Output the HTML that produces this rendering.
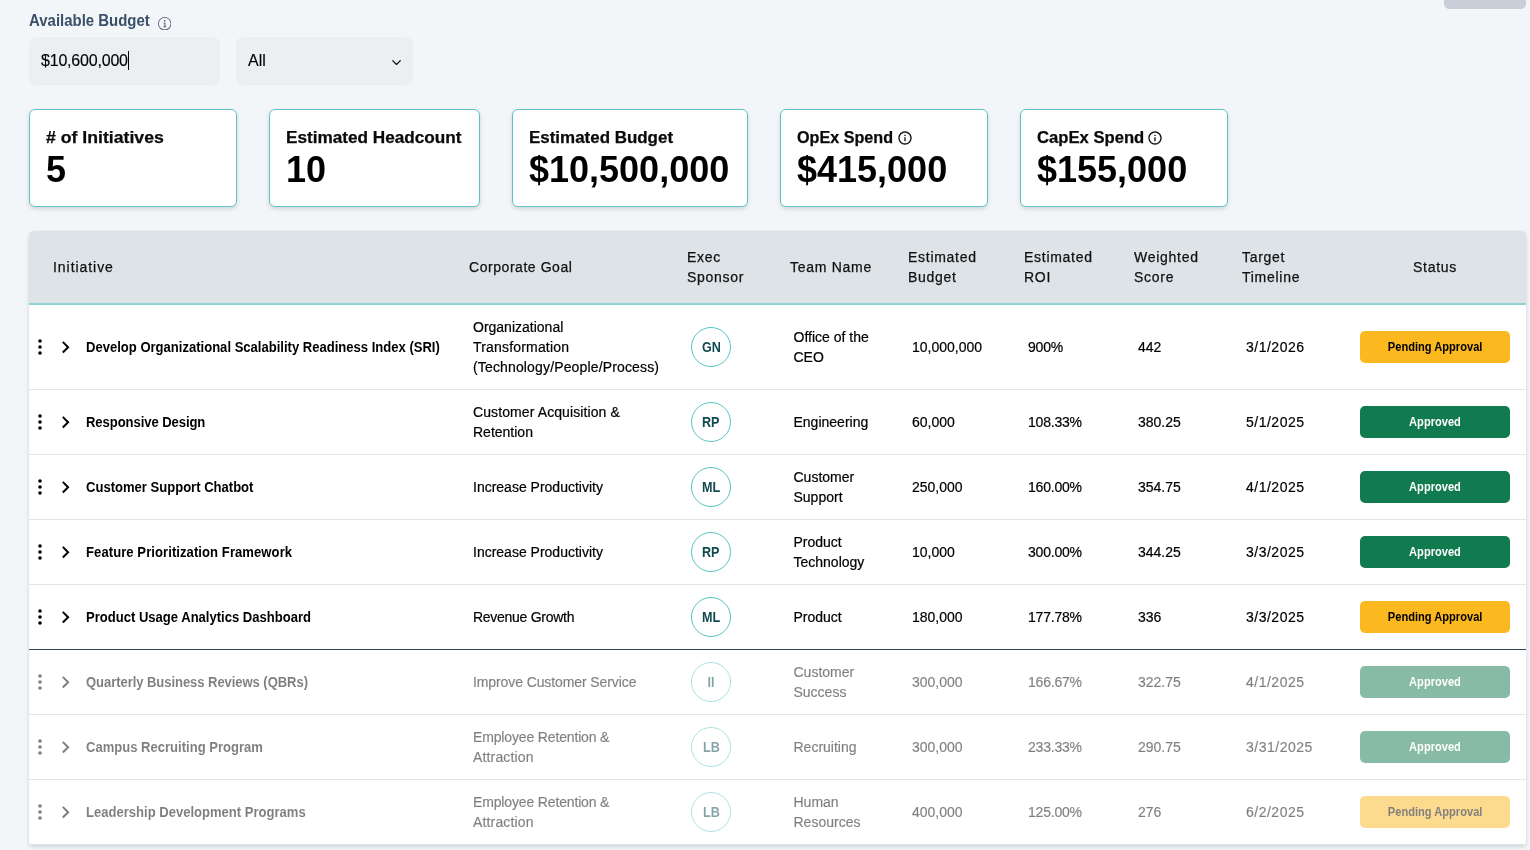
<!DOCTYPE html>
<html lang="en">
<head>
<meta charset="utf-8">
<title>Initiative Prioritization</title>
<style>
*{box-sizing:border-box;margin:0;padding:0}
html,body{width:1530px;height:850px;overflow:hidden}
body{background:#f3f6f9;font-family:"Liberation Sans","DejaVu Sans",sans-serif;color:#000;position:relative;-webkit-font-smoothing:antialiased;will-change:transform}
.abs{position:absolute}
.topbtn{left:1444px;top:-20px;width:82px;height:29px;background:#caced8;border-radius:5px}
.lbl{left:29px;top:11px;font-size:16px;line-height:20px;font-weight:bold;color:#3a4f69;white-space:nowrap;transform:scaleX(.935);transform-origin:0 50%}
.info1{left:157.8px;top:16.8px;width:13.4px;height:13.4px}
.inp{left:29px;top:37px;width:191px;height:48px;background:#eceff2;border-radius:7px;font-size:16px;line-height:48px;padding-left:12px;white-space:nowrap;letter-spacing:-.2px}
.caret{display:inline-block;width:1px;height:19px;background:#000;vertical-align:-4px;margin-left:0}
.sel{left:236px;top:37px;width:177px;height:48px;background:#eceff2;border-radius:7px;font-size:16px;line-height:48px;padding-left:12px}
.sel svg{position:absolute;left:154px;top:20px}
.card{top:109px;height:98px;background:#fff;border:1px solid #62c3c6;border-radius:6px;box-shadow:0 2px 4px rgba(0,0,0,.14);padding:0 0 0 16px}
.card .t{position:absolute;left:16px;top:16px;font-size:16px;line-height:24px;font-weight:bold;white-space:nowrap;color:#0a0a0a;transform-origin:0 50%;-webkit-text-stroke:.25px #0a0a0a}
.card .n{position:absolute;left:16px;top:39px;font-size:36px;line-height:42px;font-weight:bold;white-space:nowrap;color:#000}
.ci{position:absolute;top:20px;width:16px;height:16px;fill:#111}
.tbl{left:29px;top:231px;width:1497px;height:614px;background:#fff;border-radius:5px 5px 4px 4px;box-shadow:0 2px 4px rgba(0,0,0,.13),0 0 2px rgba(0,0,0,.07);overflow:hidden}
.hd{position:absolute;left:0;top:0;width:100%;height:74px;background:#dee3e7;border-bottom:2px solid #8ed6d6}
.hd div{position:absolute;top:50%;transform:translateY(-50%);font-size:14px;line-height:20px;letter-spacing:.72px;color:#111;white-space:nowrap}
.row{position:absolute;left:0;width:100%;border-bottom:1px solid #e2e6ea;font-size:14px;line-height:20px;-webkit-text-stroke:.2px currentColor}
.row.last{border-bottom:1px solid #2f4754}
.row>div,.row>svg{position:absolute;top:50%;transform:translateY(-50%);white-space:nowrap}
.row.dim>div,.row.dim>svg{opacity:.5}
.dots{left:-1px;width:24px;height:24px}
.chev{left:24px;width:24px;height:24px}
.nm{left:57px;font-weight:bold;transform:translateY(-50%) scaleX(.932)!important;transform-origin:0 50%}
.goal{left:444px}
.av{left:662px;width:40px;height:40px;border:1px solid #58c3c3;border-radius:50%;text-align:center;line-height:38px;font-weight:bold;font-size:14px;color:#10494f}
.team{left:764.5px}
.bud{left:883px}
.roi{left:999px;letter-spacing:-.2px}
.sc{left:1109px}
.tl{left:1217px;letter-spacing:.5px}
.st{left:1331px;width:150px;height:32px;border-radius:5px;text-align:center;line-height:32px;font-size:12px;font-weight:bold}
.nm,.st,.av{-webkit-text-stroke:0}
.hd div{-webkit-text-stroke:.25px currentColor}
.inp,.sel{-webkit-text-stroke:.15px currentColor}
.st span{display:inline-block;transform:scaleX(.925)}
.av span{display:inline-block;transform:scaleX(.9)}
.st.p{background:#fcb81f;color:#000}
.st.a{background:#127a4f;color:#fff}
</style>
</head>
<body>
<div class="abs topbtn"></div>
<div class="abs lbl">Available Budget</div>
<svg class="abs info1" viewBox="0 0 16 16" fill="#565c6c"><path d="M8 15A7 7 0 1 1 8 1a7 7 0 0 1 0 14zm0 1A8 8 0 1 0 8 0a8 8 0 0 0 0 16z"/><path d="M6.5 6.8h2.4v4.5h1v.9H6.3v-.9h1.3V7.8H6.5zM9 4.6a1 1 0 1 1-2 0 1 1 0 0 1 2 0z"/></svg>
<div class="abs inp">$10,600,000<span class="caret"></span></div>
<div class="abs sel">All<svg width="12" height="8" viewBox="0 0 12 8"><path d="M2.4 3.4l4.1 4.1 4.1-4.1" fill="none" stroke="#111" stroke-width="1.3"/></svg></div>

<div class="abs card" style="left:29px;width:208px"><div class="t" style="transform:scaleX(1.104)"># of Initiatives</div><div class="n">5</div></div>
<div class="abs card" style="left:269px;width:211px"><div class="t" style="transform:scaleX(1.073)">Estimated Headcount</div><div class="n">10</div></div>
<div class="abs card" style="left:512px;width:236px"><div class="t" style="transform:scaleX(1.059)">Estimated Budget</div><div class="n">$10,500,000</div></div>
<div class="abs card" style="left:780px;width:208px"><div class="t" style="transform:scaleX(1.01)">OpEx Spend</div><svg class="ci" viewBox="0 0 24 24" style="left:116px"><path d="M11 7h2v2h-2zm0 4h2v6h-2zm1-9C6.48 2 2 6.48 2 12s4.48 10 10 10 10-4.48 10-10S17.52 2 12 2zm0 18c-4.41 0-8-3.59-8-8s3.59-8 8-8 8 3.59 8 8-3.59 8-8 8z"/></svg><div class="n">$415,000</div></div>
<div class="abs card" style="left:1020px;width:208px"><div class="t" style="transform:scaleX(1.04)">CapEx Spend</div><svg class="ci" viewBox="0 0 24 24" style="left:126px"><path d="M11 7h2v2h-2zm0 4h2v6h-2zm1-9C6.48 2 2 6.48 2 12s4.48 10 10 10 10-4.48 10-10S17.52 2 12 2zm0 18c-4.41 0-8-3.59-8-8s3.59-8 8-8 8 3.59 8 8-3.59 8-8 8z"/></svg><div class="n">$155,000</div></div>

<div class="abs tbl">
<div class="hd">
<div style="left:24px;letter-spacing:.95px">Initiative</div>
<div style="left:440px;letter-spacing:.55px">Corporate Goal</div>
<div style="left:658px">Exec<br>Sponsor</div>
<div style="left:761px">Team Name</div>
<div style="left:879px">Estimated<br>Budget</div>
<div style="left:995px">Estimated<br>ROI</div>
<div style="left:1105px">Weighted<br>Score</div>
<div style="left:1213px">Target<br>Timeline</div>
<div style="left:1331px;width:150px;text-align:center">Status</div>
</div>
<div class="row" style="top:74px;height:85px"><svg class="dots" viewBox="0 0 24 24"><circle cx="12" cy="6" r="1.8"/><circle cx="12" cy="12" r="1.8"/><circle cx="12" cy="18" r="1.8"/></svg><svg class="chev" viewBox="0 0 24 24"><path transform="translate(.5 .2)" d="M10 6L8.59 7.41 13.17 12l-4.58 4.59L10 18l6-6z"/></svg><div class="nm">Develop Organizational Scalability Readiness Index (SRI)</div><div class="goal">Organizational<br><span style='letter-spacing:.18px'>Transformation</span><br><span style='letter-spacing:.15px'>(Technology/People/Process)</span></div><div class="av"><span>GN</span></div><div class="team">Office of the<br>CEO</div><div class="bud">10,000,000</div><div class="roi">900%</div><div class="sc">442</div><div class="tl">3/1/2026</div><div class="st p"><span>Pending Approval</span></div></div>
<div class="row" style="top:159px;height:65px"><svg class="dots" viewBox="0 0 24 24"><circle cx="12" cy="6" r="1.8"/><circle cx="12" cy="12" r="1.8"/><circle cx="12" cy="18" r="1.8"/></svg><svg class="chev" viewBox="0 0 24 24"><path transform="translate(.5 .2)" d="M10 6L8.59 7.41 13.17 12l-4.58 4.59L10 18l6-6z"/></svg><div class="nm"><span style='letter-spacing:-.07px'>Responsive Design</span></div><div class="goal"><span style='letter-spacing:.1px'>Customer Acquisition &amp;</span><br>Retention</div><div class="av"><span>RP</span></div><div class="team">Engineering</div><div class="bud">60,000</div><div class="roi">108.33%</div><div class="sc">380.25</div><div class="tl">5/1/2025</div><div class="st a"><span>Approved</span></div></div>
<div class="row" style="top:224px;height:65px"><svg class="dots" viewBox="0 0 24 24"><circle cx="12" cy="6" r="1.8"/><circle cx="12" cy="12" r="1.8"/><circle cx="12" cy="18" r="1.8"/></svg><svg class="chev" viewBox="0 0 24 24"><path transform="translate(.5 .2)" d="M10 6L8.59 7.41 13.17 12l-4.58 4.59L10 18l6-6z"/></svg><div class="nm">Customer Support Chatbot</div><div class="goal">Increase Productivity</div><div class="av"><span>ML</span></div><div class="team">Customer<br>Support</div><div class="bud">250,000</div><div class="roi">160.00%</div><div class="sc">354.75</div><div class="tl">4/1/2025</div><div class="st a"><span>Approved</span></div></div>
<div class="row" style="top:289px;height:65px"><svg class="dots" viewBox="0 0 24 24"><circle cx="12" cy="6" r="1.8"/><circle cx="12" cy="12" r="1.8"/><circle cx="12" cy="18" r="1.8"/></svg><svg class="chev" viewBox="0 0 24 24"><path transform="translate(.5 .2)" d="M10 6L8.59 7.41 13.17 12l-4.58 4.59L10 18l6-6z"/></svg><div class="nm"><span style='letter-spacing:.08px'>Feature Prioritization Framework</span></div><div class="goal">Increase Productivity</div><div class="av"><span>RP</span></div><div class="team">Product<br>Technology</div><div class="bud">10,000</div><div class="roi">300.00%</div><div class="sc">344.25</div><div class="tl">3/3/2025</div><div class="st a"><span>Approved</span></div></div>
<div class="row last" style="top:354px;height:65px"><svg class="dots" viewBox="0 0 24 24"><circle cx="12" cy="6" r="1.8"/><circle cx="12" cy="12" r="1.8"/><circle cx="12" cy="18" r="1.8"/></svg><svg class="chev" viewBox="0 0 24 24"><path transform="translate(.5 .2)" d="M10 6L8.59 7.41 13.17 12l-4.58 4.59L10 18l6-6z"/></svg><div class="nm">Product Usage Analytics Dashboard</div><div class="goal"><span style='letter-spacing:-.28px'>Revenue Growth</span></div><div class="av"><span>ML</span></div><div class="team">Product</div><div class="bud">180,000</div><div class="roi">177.78%</div><div class="sc">336</div><div class="tl">3/3/2025</div><div class="st p"><span>Pending Approval</span></div></div>
<div class="row dim" style="top:419px;height:65px"><svg class="dots" viewBox="0 0 24 24"><circle cx="12" cy="6" r="1.8"/><circle cx="12" cy="12" r="1.8"/><circle cx="12" cy="18" r="1.8"/></svg><svg class="chev" viewBox="0 0 24 24"><path transform="translate(.5 .2)" d="M10 6L8.59 7.41 13.17 12l-4.58 4.59L10 18l6-6z"/></svg><div class="nm"><span style='letter-spacing:-.07px'>Quarterly Business Reviews (QBRs)</span></div><div class="goal"><span style='letter-spacing:-.1px'>Improve Customer Service</span></div><div class="av"><span>II</span></div><div class="team">Customer<br>Success</div><div class="bud">300,000</div><div class="roi">166.67%</div><div class="sc">322.75</div><div class="tl">4/1/2025</div><div class="st a"><span>Approved</span></div></div>
<div class="row dim" style="top:484px;height:65px"><svg class="dots" viewBox="0 0 24 24"><circle cx="12" cy="6" r="1.8"/><circle cx="12" cy="12" r="1.8"/><circle cx="12" cy="18" r="1.8"/></svg><svg class="chev" viewBox="0 0 24 24"><path transform="translate(.5 .2)" d="M10 6L8.59 7.41 13.17 12l-4.58 4.59L10 18l6-6z"/></svg><div class="nm">Campus Recruiting Program</div><div class="goal"><span style='letter-spacing:-.15px'>Employee Retention &amp;</span><br><span style='letter-spacing:.15px'>Attraction</span></div><div class="av"><span>LB</span></div><div class="team">Recruiting</div><div class="bud">300,000</div><div class="roi">233.33%</div><div class="sc">290.75</div><div class="tl">3/31/2025</div><div class="st a"><span>Approved</span></div></div>
<div class="row dim" style="top:549px;height:65px"><svg class="dots" viewBox="0 0 24 24"><circle cx="12" cy="6" r="1.8"/><circle cx="12" cy="12" r="1.8"/><circle cx="12" cy="18" r="1.8"/></svg><svg class="chev" viewBox="0 0 24 24"><path transform="translate(.5 .2)" d="M10 6L8.59 7.41 13.17 12l-4.58 4.59L10 18l6-6z"/></svg><div class="nm">Leadership Development Programs</div><div class="goal"><span style='letter-spacing:-.15px'>Employee Retention &amp;</span><br><span style='letter-spacing:.15px'>Attraction</span></div><div class="av"><span>LB</span></div><div class="team">Human<br>Resources</div><div class="bud">400,000</div><div class="roi">125.00%</div><div class="sc">276</div><div class="tl">6/2/2025</div><div class="st p"><span>Pending Approval</span></div></div>
</div>
</body>
</html>
